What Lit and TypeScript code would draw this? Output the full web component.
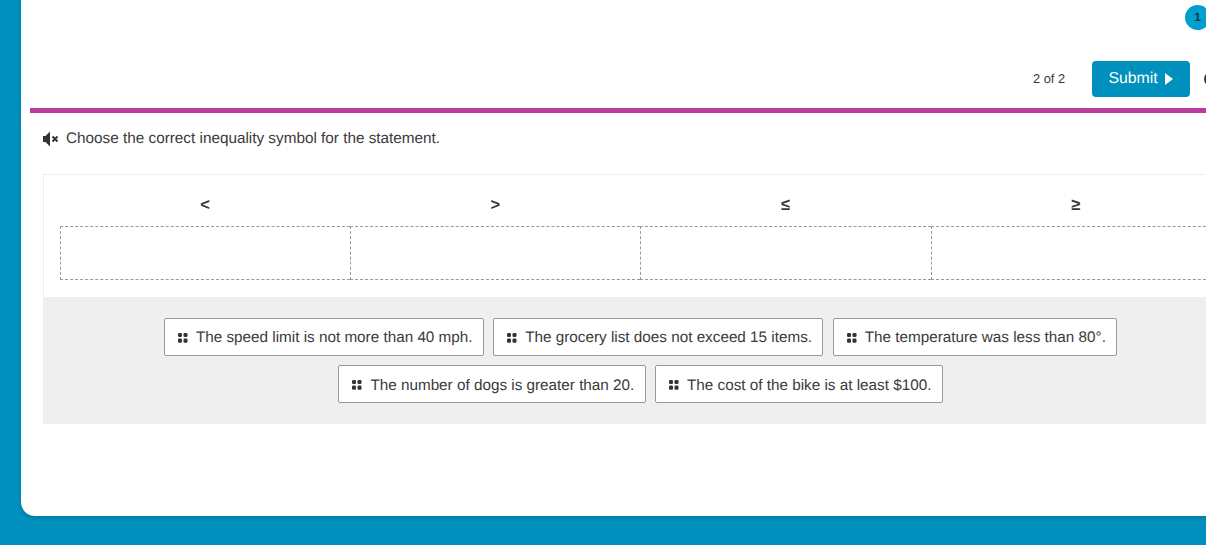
import { LitElement, html, css } from "lit";
import { customElement } from "lit/decorators.js";

const grip = html`<svg class="grip" width="10" height="10" viewBox="0 0 10 10"><rect x="0" y="0" width="4" height="4" rx="1.2"/><rect x="5.500" y="0" width="4" height="4" rx="1.2"/><rect x="0" y="5.500" width="4" height="4.200" rx="1.2"/><rect x="5.500" y="5.500" width="4" height="4.200" rx="1.2"/></svg>`;

@customElement("app-root")
export class AppRoot extends LitElement {
  static styles = css`
    :host { display: block; width: 1206px; height: 545px; overflow: hidden; background: #0090bd; font-family: "Liberation Sans", Arial, sans-serif; color: #3a3a3a; position: relative; text-rendering: geometricPrecision; }
    .card { box-sizing: border-box; margin-left: 21px; width: 1300px; height: 516px; background: #fff; border-bottom-left-radius: 14px; padding: 61px 0 0 9px; position: relative; box-shadow: 0 2px 4px rgba(0,60,90,.25); }
    .badge { position: absolute; left: 1164px; top: 5px; width: 25px; height: 25px; border-radius: 50%; background: #009fcf; color: #17394a; font-size: 12px; font-weight: 700; display: flex; align-items: center; justify-content: center; padding-bottom: 1px; box-sizing: border-box; }
    .top { display: flex; align-items: center; height: 36px; margin-bottom: 11px; }
    .count { margin-left: 1003px; width: 59px; font-size: 12.8px; padding-bottom: 1px; }
    .submit { box-sizing: border-box; width: 98px; height: 36px; border-radius: 4px; background: #0090bd; color: #fff; font-size: 15.8px; display: flex; align-items: center; justify-content: center; gap: 7px; padding: 0 1px 0 0; }
    .tri { width: 0; height: 0; border-left: 8px solid #fff; border-top: 6.500px solid transparent; border-bottom: 6.500px solid transparent; }
    .more { margin-left: 14px; width: 14px; height: 14px; box-sizing: border-box; border: 2px solid #333; border-radius: 50%; }
    .rule { height: 5px; background: #b93b9b; }
    .q { display: flex; align-items: center; gap: 7px; margin: 16px 0 0 13px; height: 19px; font-size: 15.3px; line-height: 19px; }
    .box { box-sizing: border-box; margin: 26px 0 0 13px; width: 1195px; height: 250px; border: 1px solid #eee; }
    .cols { display: grid; grid-template-columns: repeat(4, 290.2px); padding: 0 0 0 16px; height: 122px; box-sizing: border-box; }
    .col { display: flex; flex-direction: column; }
    .sym { height: 51px; display: flex; align-items: center; justify-content: center; font-size: 16.500px; font-weight: 700; padding-top: 9px; box-sizing: border-box; }
    .slot { box-sizing: border-box; height: 54px; border: 1px dashed #999; border-right: none; }
    .col:last-child .slot { border-right: 1px dashed #999; }
    .bank { height: 126px; background: #efefef; display: flex; flex-direction: column; align-items: center; gap: 9px; padding-top: 21px; box-sizing: border-box; }
    .row { display: flex; gap: 9.500px; }
    .chip { box-sizing: border-box; height: 38px; background: #fff; border: 1px solid #999; border-radius: 2px; display: flex; align-items: center; gap: 8px; padding: 1px 10.200px 0 13px; font-size: 15.28px; white-space: nowrap; }
    .row + .row .chip { padding-top: 2px; }
    .grip { fill: #333; flex: none; }
  `;

  render() {
    const chip = (t: string) => html`<div class="chip">${grip}<span>${t}</span></div>`;
    return html`<div class="card">
      <div class="badge">1</div>
      <div class="top">
        <div class="count">2 of 2</div>
        <div class="submit">Submit<span class="tri"></span></div>
        <div class="more"></div>
      </div>
      <div class="rule"></div>
      <div class="q">
        <svg width="16" height="16" viewBox="0 0 16 16"><path fill="#333" d="M0 5h2.500L7 .5v15L2.500 11H0z"/><path stroke="#333" stroke-width="1.900" d="M9.500 5.500l5 5M14.500 5.500l-5 5"/></svg>
        <span>Choose the correct inequality symbol for the statement.</span>
      </div>
      <div class="box">
        <div class="cols">
          ${["<", ">", "≤", "≥"].map((s) => html`<div class="col"><div class="sym">${s}</div><div class="slot"></div></div>`)}
        </div>
        <div class="bank">
          <div class="row">${chip("The speed limit is not more than 40 mph.")}${chip("The grocery list does not exceed 15 items.")}${chip("The temperature was less than 80°.")}</div>
          <div class="row">${chip("The number of dogs is greater than 20.")}${chip("The cost of the bike is at least $100.")}</div>
        </div>
      </div>
    </div>`;
  }
}
